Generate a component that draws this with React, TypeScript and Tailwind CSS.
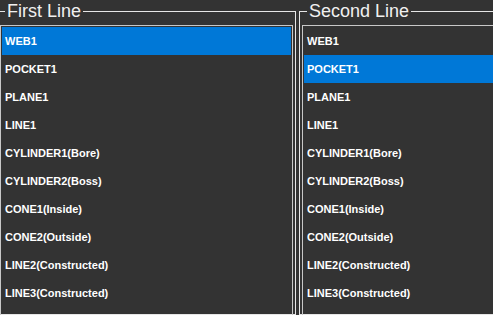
import React from 'react';

const items = [
  'WEB1',
  'POCKET1',
  'PLANE1',
  'LINE1',
  'CYLINDER1(Bore)',
  'CYLINDER2(Boss)',
  'CONE1(Inside)',
  'CONE2(Outside)',
  'LINE2(Constructed)',
  'LINE3(Constructed)',
];

const GroupList = ({ title, selected, className }: { title: string; selected: number; className: string }) => (
  <div className={`relative mt-[11px] border border-[#e6e6e6] px-[2px] pt-[13px] ${className}`}>
    <div className="absolute -top-[12px] left-[7px] bg-[#333333] px-[2px] text-[18px] leading-[22px] text-[#f0f0f0] font-['Liberation_Sans',sans-serif]">
      {title}
    </div>
    <div className="h-[300px] border border-[#c8c8c8] p-px">
      {items.map((item, i) => (
        <div
          key={item}
          className={`flex h-[28px] items-center pl-[3px] text-[11px] font-bold text-white font-['Liberation_Sans',sans-serif] ${
            i === selected ? 'bg-[#0078d7]' : ''
          }`}
        >
          {item}
        </div>
      ))}
    </div>
  </div>
);

export default function App() {
  return (
    <div className="flex h-[315px] w-[493px] gap-[3px] overflow-hidden bg-[#333333]">
      <GroupList title="First Line" selected={0} className="-ml-[3px] w-[299px] shrink-0" />
      <GroupList title="Second Line" selected={1} className="w-[220px] shrink-0" />
    </div>
  );
}
